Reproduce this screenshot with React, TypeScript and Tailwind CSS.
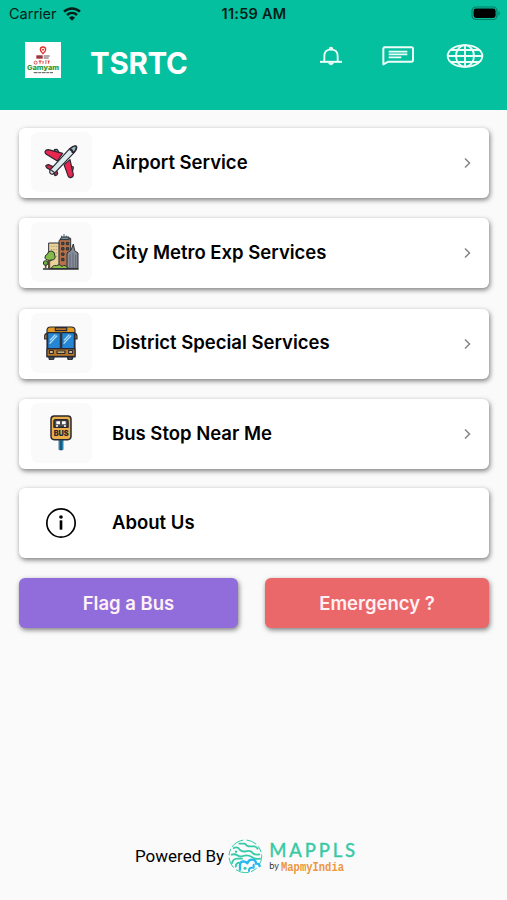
import type { ReactNode } from 'react';

function WifiIcon() {
  return (
    <svg width="18" height="14" viewBox="0 0 54 42" fill="none" stroke="#031d18" strokeWidth="7.500">
      <path d="M3 14C17 1 37 1 51 14" />
      <path d="M12 24C21 16 33 16 42 24" />
      <path d="M18 32C23 26 31 26 36 32L27 41Z" fill="#031d18" stroke="none" />
    </svg>
  );
}

function BatteryIcon() {
  return (
    <svg width="30" height="15" viewBox="0 0 30 15">
      <rect x="1" y="1" width="25" height="12.5" rx="4" fill="none" stroke="#047d66" strokeWidth="1.2" />
      <rect x="2.6" y="2.6" width="22" height="9.4" rx="2.4" fill="#000" />
      <path d="M27.5 5v4.600c1.800-.8 1.800-3.800 0-4.600" fill="#047d66" />
    </svg>
  );
}

function AppLogo() {
  return (
    <svg width="36" height="36" viewBox="0 0 108 108">
      <rect width="108" height="108" fill="#fff" />
      <path d="M54 35C49 29 46 27 46 23a8 8 0 0 1 16 0c0 4-3 6-8 12Z" fill="none" stroke="#e2322d" strokeWidth="4" />
      <circle cx="54" cy="23" r="3" fill="#e2322d" />
      <path d="M34 40h19v10H34Z" fill="#a92c33" />
      <path d="M37 43h13M56 42h18M56 48h15" stroke="#6b5254" strokeWidth="3" />
      <circle cx="32" cy="62" r="4.500" fill="none" stroke="#c43b35" strokeWidth="2.500" />
      <path d="M41 57h9M45 57v8M54 57v8M60 57h5M60 63h5M68 57h6M71 57v8" stroke="#e2322d" strokeWidth="3" />
      <text x="6" y="83" fontFamily="Inter, sans-serif" fontSize="20" fontWeight="800" fill="#2d9a35" textLength="96" lengthAdjust="spacingAndGlyphs">Gamyam</text>
      <path d="M26 92h58" stroke="#555" strokeWidth="3" strokeDasharray="12 2 8 2" />
    </svg>
  );
}

function BellIcon() {
  return (
    <svg width="24" height="20" viewBox="0 0 72 60" fill="none" stroke="#effdf9" strokeWidth="5.500">
      <path d="M16 46V30C16 18 24 11 36 11s20 7 20 19v16" />
      <path d="M3 47.500h66" strokeWidth="6" />
      <path d="M32 9a4 4 0 0 1 8 0" />
      <path d="M29 51c1 7 13 7 14 0Z" fill="#effdf9" strokeWidth="2" />
    </svg>
  );
}

function ChatIcon() {
  return (
    <svg width="32" height="20" viewBox="0 0 96 60" fill="none" stroke="#effdf9" strokeWidth="6">
      <path d="M4 55V8Q4 4 8 4h80q5 0 5 5v33q0 5-5 5H19Z" strokeLinejoin="round" />
      <path d="M20 17h56M20 25h56M20 34h38" strokeWidth="5" />
    </svg>
  );
}

function GlobeIcon() {
  return (
    <svg width="38" height="24" viewBox="0 0 114 72" fill="none" stroke="#effdf9" strokeWidth="5.500">
      <ellipse cx="57" cy="36" rx="52" ry="32.500" />
      <ellipse cx="57" cy="36" rx="27" ry="32.500" />
      <path d="M57 3v66M5 36h104M14 18h86M14 54h86" />
    </svg>
  );
}

function PlaneIcon() {
  return (
    <svg width="34" height="34" viewBox="0 0 102 102" stroke="#2a2430" strokeWidth="3.500" strokeLinejoin="round">
      <path d="M31 14l8-1 5 7-7 6ZM79 63l9 3-1 9-8 1Z" fill="#8fa9aa" />
      <path d="M3 20q2-6 10-6l43 11-16 23-33-20Q2 24 3 20Z" fill="#e9264f" />
      <path d="M60 59l18-15 10 45q0 7-8 9-5 1-8-6Z" fill="#e9264f" />
      <path d="M5 63q4-5 10-4l15 7-6 12-16-10ZM26 77l9-7 6 15q-1 6-8 7Z" fill="#c92c49" />
      <path d="M19 85q-5-6 3-14L77 11Q88 1 97 3q5 7-6 19L36 80Q25 92 19 85Z" fill="#dcebed" />
      <path d="M78 12q8 1 10 12 8-9 9-17 0-4-4-4-6 1-15 9Z" fill="#8fbabb" />
      <path d="M77 13q8 4 9 11" fill="none" strokeWidth="5" />
      <path d="M22 76l10 7" fill="none" />
    </svg>
  );
}

function CityIcon() {
  return (
    <svg width="36" height="36" viewBox="0 0 108 108" stroke="#2c3033" strokeWidth="3" strokeLinejoin="round">
      <path d="M17 27h32v76H17Z" fill="#e9d29b" />
      <path d="M24 37h20M24 47h20M24 57h20M24 67h20" stroke="#ae9c70" strokeDasharray="4 3" />
      <path d="M63 0v13M56 5v8M70 5v8" stroke="#4b6677" />
      <path d="M48 20l8-7h27v90H48Z" fill="#b6714a" />
      <path d="M56 9h22v8H51Z" fill="#71909f" />
      <path d="M56 25h7v7h-7ZM70 25h7v7h-7ZM56 41h7v7h-7ZM70 41h7v7h-7ZM56 57h7v7h-7ZM56 73h7v7h-7Z" fill="#38576a" />
      <path d="M72 103V57l12-8 7-19 4 20 10 7v46Z" fill="#868c98" />
      <path d="M81 61v40M90 56v45M98 62v39" stroke="#626977" />
      <path d="M19 103V66M19 82l10-9M8 103V87" stroke="#754c27" strokeWidth="5" />
      <path d="M19 79q-14-1-13-10 1-7 7-8 1-10 12-10 11 2 10 12 5 14-8 15Z" fill="#83bb46" />
      <circle cx="8" cy="87" r="7" fill="#6fac41" />
      <path d="M25 104q4-12 15-9 10-7 17 2 10-8 18 7Z" fill="#8bc34a" />
      <path d="M0 105h107" strokeWidth="4" />
    </svg>
  );
}

function BusIcon() {
  return (
    <svg width="34" height="34" viewBox="0 0 102 102" stroke="#252936" strokeWidth="3.500" strokeLinejoin="round">
      <path d="M15 88h15v9q-2 5-7 5-8 0-8-6ZM71 88h15v9q-2 5-7 5-8 0-8-6Z" fill="#4b5059" />
      <path d="M9 22q-7 1-7 9v8h7M91 22q8 1 8 9v8h-8" fill="#d58b21" />
      <path d="M9 13q0-10 11-10h62q11 0 11 10v80H9Z" fill="#e39a23" />
      <path d="M34 5h34v9H34Z" fill="#b57528" />
      <path d="M11 20h38v48H11ZM53 20h38v48H53Z" fill="#2686d6" />
      <path d="M17 53l22-24M18 43l16-17M59 53l22-24M60 43l16-17" stroke="#b8e2fa" strokeWidth="4" />
      <path d="M9 69h84v22H9Z" fill="#bc7829" />
      <path d="M39 75h24v7H39Z" fill="#f6d888" />
      <path d="M16 74h12v8H16ZM74 74h12v8H74Z" fill="#ffe9a8" />
    </svg>
  );
}

function BusStopIcon() {
  return (
    <svg width="34" height="36" viewBox="0 0 102 108" stroke="#292931" strokeWidth="4.500" strokeLinejoin="round">
      <path d="M45 74h12v30H45Z" fill="#289ad2" stroke="#236687" strokeWidth="2.500" />
      <path d="M51 77v29" stroke="#173a4e" strokeWidth="4" />
      <rect x="21" y="3" width="60" height="71" rx="10" fill="#ebae4b" />
      <path d="M34 14h34q4 0 4 6v17H30V20q0-6 4-6Z" fill="#4b4a4e" />
      <path d="M37 19h11v9H37ZM54 19h11v9H54Z" fill="#fff" stroke="none" />
      <path d="M36 33h6M60 33h6" stroke="#fff" strokeWidth="4" />
      <text x="29" y="64" fontFamily="Inter, sans-serif" fontSize="21" fontWeight="900" fill="#292931" stroke="none" textLength="45" lengthAdjust="spacingAndGlyphs">BUS</text>
    </svg>
  );
}

function InfoIcon() {
  return (
    <svg width="32" height="32" viewBox="0 0 96 96" fill="none" stroke="#000" strokeWidth="5">
      <circle cx="48" cy="48" r="42.500" />
      <circle cx="48" cy="30" r="5.500" fill="#000" stroke="none" />
      <path d="M48 40v28" strokeWidth="8" />
    </svg>
  );
}

function MapplsIcon() {
  return (
    <svg width="35" height="35" viewBox="0 0 105 105" fill="none" stroke="#35cba8" strokeWidth="5.500" strokeLinecap="round" strokeLinejoin="round">
      <circle cx="52" cy="52" r="49" strokeWidth="3" strokeDasharray="30 10 18 9 38 12" />
      <path d="M34 14h17q5 8 15 8h13q6 1 10 7" />
      <path d="M17 27q8-4 14 0l5 6q7 6 17 4 10-3 17 1l6 6q7 4 18 2" />
      <path d="M11 47q10-3 17 2 8 6 17 2 14-5 25 2 10 9 26 6" />
      <path d="M12 72q3-12 15-13h15M23 83q0-10 10-12" />
      <path d="M36 92V79q0-11 9-12 8 0 13 6 4-11 14-11 12 0 12 12 10-1 11 7" stroke="#27b8f0" strokeWidth="7" />
      <path d="M63 96q-1-10 9-10h5v-9" stroke="#27b8f0" strokeWidth="6" />
      <circle cx="51" cy="88" r="4.500" fill="#35cba8" stroke="none" />
      <circle cx="24" cy="38" r="3.500" fill="#35cba8" stroke="none" />
    </svg>
  );
}

function IconTile({ children }: { children: ReactNode }) {
  return <div className="mb-[2px] grid h-[60px] w-[61px] place-items-center rounded-lg bg-[#fafafa] pr-[2px]">{children}</div>;
}

const services = [
  { label: 'Airport Service', icon: <PlaneIcon /> },
  { label: 'City Metro Exp Services', icon: <CityIcon /> },
  { label: 'District Special Services', icon: <BusIcon /> },
  { label: 'Bus Stop Near Me', icon: <BusStopIcon /> }
];

const shadow = 'shadow-[1px_2px_5px_rgba(0,0,0,0.5)]';

export default function App() {
  return (
    <div className="flex h-[900px] w-[507px] flex-col overflow-hidden bg-[#fafafa] font-['Inter',sans-serif] text-black">
      <header className="h-[110px] bg-[#04c09e]">
        <div className="grid h-7 grid-cols-3 items-center pb-px pl-[9px] pr-[6px] text-[#031d18]">
          <div className="flex items-center gap-[6px] text-[14.500px]"><span>Carrier</span><WifiIcon /></div>
          <div className="pr-[2px] text-center text-[14.500px] font-semibold tracking-[0.25px]">11:59 AM</div>
          <div className="flex justify-end"><BatteryIcon /></div>
        </div>
        <div className="flex pl-[25px] pr-[23px]">
          <div className="pt-[14px]"><AppLogo /></div>
          <h1 className="ml-[29px] mt-[13px] text-[29.500px] font-bold leading-[44px] tracking-[-0.3px] text-white">TSRTC</h1>
          <div className="ml-auto flex h-14 items-center">
            <BellIcon />
            <div className="ml-[39px]"><ChatIcon /></div>
            <div className="ml-[32px]"><GlobeIcon /></div>
          </div>
        </div>
      </header>

      <main className="pl-[19px] pr-[18px] pt-[18px]">
        <div className="flex flex-col gap-[20.400px]">
          {services.map(({ label, icon }) => (
            <button key={label} className={`flex h-[70px] items-center rounded-md bg-white pl-3 pr-4 text-left ${shadow}`}>
              <IconTile>{icon}</IconTile>
              <span className="mb-px ml-5 text-[18.500px] font-semibold">{label}</span>
              <svg className="ml-auto" width="10" height="12" viewBox="0 0 10 12" fill="none" stroke="#858585" strokeWidth="1.500"><path d="M2 1.500L6.500 6 2 10.500" /></svg>
            </button>
          ))}
        </div>
        <button className={`mt-[18.800px] flex h-[70px] w-full items-center rounded-md bg-white pl-3 text-left ${shadow}`}>
          <div className="grid w-[61px] place-items-center pr-[2px]"><InfoIcon /></div>
          <span className="mb-px ml-5 text-[18.500px] font-semibold">About Us</span>
        </button>
        <div className="mt-5 flex justify-between text-[18.500px] font-semibold text-[#fff1f4]">
          <button className={`h-[50px] w-[219px] rounded-md bg-[#916cdb] pt-[2px] ${shadow}`}>Flag a Bus</button>
          <button className={`h-[50px] w-[224px] rounded-md bg-[#ea686a] pt-[2px] ${shadow}`}>Emergency ?</button>
        </div>
      </main>

      <footer className="mb-[26px] mt-auto flex h-[35px] items-center pl-[135px]">
        <span className="font-['Roboto',sans-serif] text-[17px]">Powered By</span>
        <div className="ml-[4px]"><MapplsIcon /></div>
        <div className="ml-[6px] flex h-[35px] flex-col">
          <span className="mt-[2px] font-['Lato',sans-serif] text-[18.500px] leading-[19px] tracking-[2.900px] text-[#37c9a4] [-webkit-text-stroke:0.4px_#37c9a4]">MAPPLS</span>
          <div className="flex h-3 items-center text-[#333]">
            <span className="w-[11px] text-[8.500px] leading-3">by</span>
            <svg className="overflow-visible" width="74" height="17" viewBox="0 0 74 17">
              <text x="1" y="13" fontFamily="'Liberation Mono', monospace" fontSize="12" fontWeight="700" fill="#ec9642" textLength="63" lengthAdjust="spacingAndGlyphs">MapmyIndia</text>
            </svg>
          </div>
        </div>
      </footer>
    </div>
  );
}
